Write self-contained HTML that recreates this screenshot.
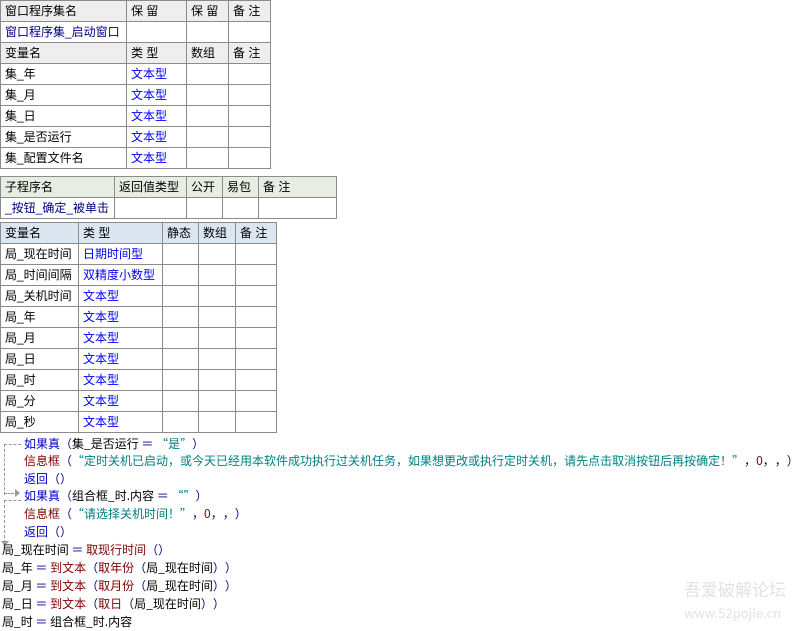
<!DOCTYPE html><html lang="zh-CN"><head><meta charset="utf-8"><style>
body{margin:0;width:804px;height:630px;background:#fff;position:relative;overflow:hidden;font-family:"Liberation Sans","Noto Sans CJK SC",sans-serif;font-size:12px;color:#000}
table{position:absolute;border-collapse:collapse;table-layout:fixed}
td{border:1px solid #8c8c8c;height:20px;padding:0 0 0 4px;white-space:nowrap;overflow:hidden;line-height:20px}
.h1 td{background:#eeeeee}.h2 td{background:#e6ede3}.h3 td{background:#dce6f0}
.b{color:#0000ff}.n{color:#000080}.r{color:#800000}.t{color:#008080}.k{color:#0000c8}
.l{position:absolute;white-space:nowrap;line-height:18px;font-family:"Noto Sans CJK SC",sans-serif}
.p{display:inline-block;width:12px;text-align:center}
.d{position:absolute;border-color:#999;border-style:dashed;border-width:0}
</style></head><body>
<table style="left:0;top:0;width:271px">
<colgroup><col style="width:126px"><col style="width:60px"><col style="width:42px"><col style="width:42px"></colgroup>
<tr class="h1"><td>窗口程序集名</td><td>保 留</td><td>保 留</td><td>备 注</td></tr>
<tr><td class="n">窗口程序集_启动窗口</td><td></td><td></td><td></td></tr>
<tr class="h1"><td>变量名</td><td>类 型</td><td>数组</td><td>备 注</td></tr>
<tr><td>集_年</td><td class="b">文本型</td><td></td><td></td></tr>
<tr><td>集_月</td><td class="b">文本型</td><td></td><td></td></tr>
<tr><td>集_日</td><td class="b">文本型</td><td></td><td></td></tr>
<tr><td>集_是否运行</td><td class="b">文本型</td><td></td><td></td></tr>
<tr><td>集_配置文件名</td><td class="b">文本型</td><td></td><td></td></tr>
</table>
<table style="left:0;top:176px;width:337px">
<colgroup><col style="width:114px"><col style="width:72px"><col style="width:36px"><col style="width:36px"><col style="width:78px"></colgroup>
<tr class="h2"><td>子程序名</td><td>返回值类型</td><td>公开</td><td>易包</td><td>备 注</td></tr>
<tr><td class="n">_按钮_确定_被单击</td><td></td><td></td><td></td><td></td></tr>
</table>
<table style="left:0;top:222px;width:277px">
<colgroup><col style="width:78px"><col style="width:84px"><col style="width:36px"><col style="width:37px"><col style="width:41px"></colgroup>
<tr class="h3"><td>变量名</td><td>类 型</td><td>静态</td><td>数组</td><td>备 注</td></tr>
<tr><td>局_现在时间</td><td class="b">日期时间型</td><td></td><td></td><td></td></tr>
<tr><td>局_时间间隔</td><td class="b">双精度小数型</td><td></td><td></td><td></td></tr>
<tr><td>局_关机时间</td><td class="b">文本型</td><td></td><td></td><td></td></tr>
<tr><td>局_年</td><td class="b">文本型</td><td></td><td></td><td></td></tr>
<tr><td>局_月</td><td class="b">文本型</td><td></td><td></td><td></td></tr>
<tr><td>局_日</td><td class="b">文本型</td><td></td><td></td><td></td></tr>
<tr><td>局_时</td><td class="b">文本型</td><td></td><td></td><td></td></tr>
<tr><td>局_分</td><td class="b">文本型</td><td></td><td></td><td></td></tr>
<tr><td>局_秒</td><td class="b">文本型</td><td></td><td></td><td></td></tr>
</table>
<div class="d" style="left:4px;top:444px;width:16px;height:50px;border-top-width:1px;border-left-width:1px"></div>
<div class="d" style="left:4px;top:493px;width:10px;border-top-width:1px"></div>
<div style="position:absolute;left:15px;top:489px;width:0;height:0;border-left:5px solid #999;border-top:4px solid transparent;border-bottom:4px solid transparent"></div>
<div class="d" style="left:4px;top:500px;width:16px;height:42px;border-top-width:1px;border-left-width:1px"></div>
<div style="position:absolute;left:1px;top:541px;width:0;height:0;border-top:5px solid #999;border-left:4px solid transparent;border-right:4px solid transparent"></div>
<div class="l" style="left:24px;top:435px"><span class="k">如果真</span><span class="n p">（</span>集_是否运行 <span class="n p">＝</span> <span class="t"><span class="p">“</span>是<span class="p">”</span></span><span class="n p">）</span></div>
<div class="l" style="left:24px;top:452px"><span class="r">信息框</span><span class="n p">（</span><span class="t"><span class="p">“</span>定时关机已启动<span class="p">，</span>或今天已经用本软件成功执行过关机任务<span class="p">，</span>如果想更改或执行定时关机<span class="p">，</span>请先点击取消按钮后再按确定<span class="p">！</span><span class="p">”</span></span><span class="n p">，</span><span class="r">0</span><span class="n p">，</span><span class="n p">，</span><span class="n p">）</span></div>
<div class="l" style="left:24px;top:470px"><span class="k">返回</span><span class="n p">（</span><span class="n p">）</span></div>
<div class="l" style="left:24px;top:487px"><span class="k">如果真</span><span class="n p">（</span>组合框_时.内容 <span class="n p">＝</span> <span class="t"><span class="p">“</span><span class="p">”</span></span><span class="n p">）</span></div>
<div class="l" style="left:24px;top:505px"><span class="r">信息框</span><span class="n p">（</span><span class="t"><span class="p">“</span>请选择关机时间<span class="p">！</span><span class="p">”</span></span><span class="n p">，</span><span class="r">0</span><span class="n p">，</span><span class="n p">，</span><span class="n p">）</span></div>
<div class="l" style="left:24px;top:523px"><span class="k">返回</span><span class="n p">（</span><span class="n p">）</span></div>
<div class="l" style="left:2px;top:541px">局_现在时间 <span class="n p">＝</span> <span class="r">取现行时间</span><span class="n p">（</span><span class="n p">）</span></div>
<div class="l" style="left:2px;top:559px">局_年 <span class="n p">＝</span> <span class="r">到文本</span><span class="n p">（</span><span class="r">取年份</span><span class="n p">（</span>局_现在时间<span class="n p">）</span><span class="n p">）</span></div>
<div class="l" style="left:2px;top:577px">局_月 <span class="n p">＝</span> <span class="r">到文本</span><span class="n p">（</span><span class="r">取月份</span><span class="n p">（</span>局_现在时间<span class="n p">）</span><span class="n p">）</span></div>
<div class="l" style="left:2px;top:595px">局_日 <span class="n p">＝</span> <span class="r">到文本</span><span class="n p">（</span><span class="r">取日</span><span class="n p">（</span>局_现在时间<span class="n p">）</span><span class="n p">）</span></div>
<div class="l" style="left:2px;top:613px">局_时 <span class="n p">＝</span> 组合框_时.内容</div>
<div class="l" style="left:684px;top:580px;font-size:17px;color:#e2e2e2">吾爱破解论坛</div>
<div class="l" style="left:684px;top:604px;font-size:13px;color:#e2e2e2">www.52pojie.cn</div>
</body></html>
